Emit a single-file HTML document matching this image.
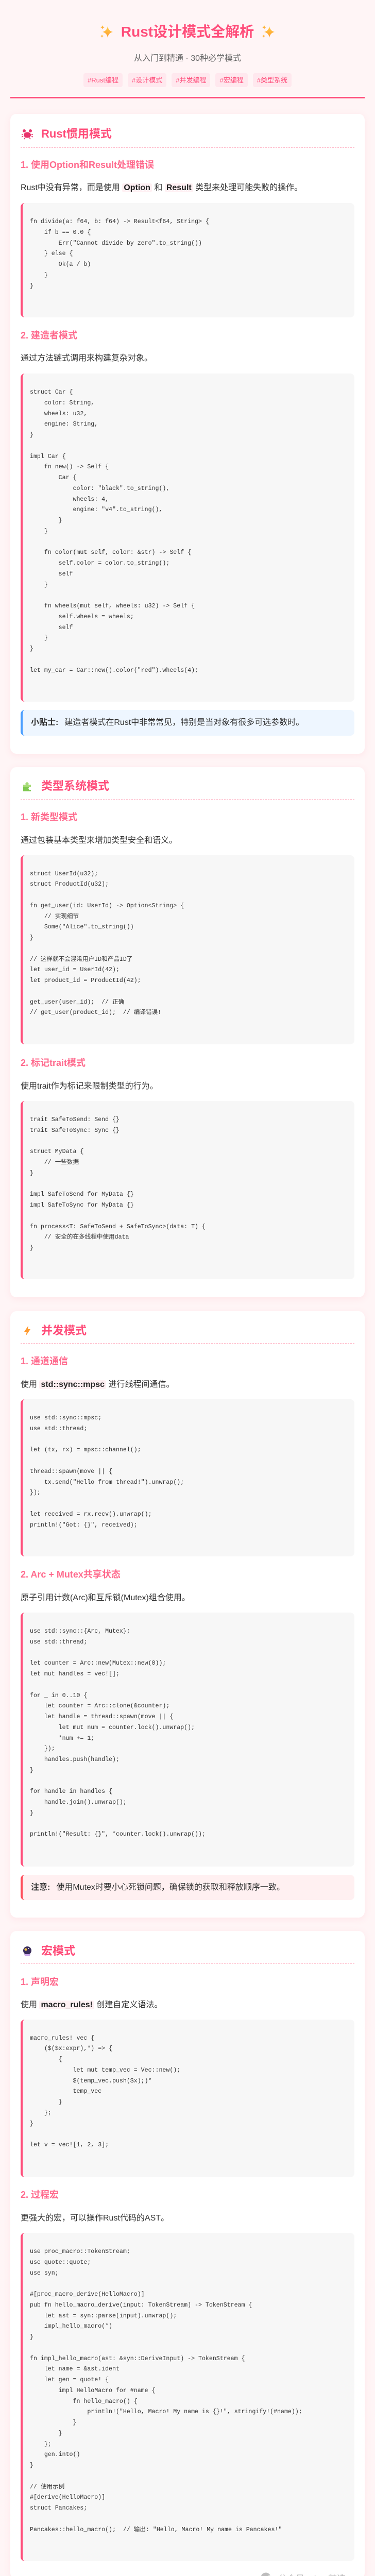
<!DOCTYPE html>
<html><head><meta charset="utf-8">
<style>
*{margin:0;padding:0;box-sizing:border-box}
html,body{width:728px;height:5032px;background:#fff5f6;overflow:hidden}
body{position:relative;font-family:"Liberation Sans","Noto Sans CJK SC",sans-serif;color:#333}
.a{position:absolute}
.card{position:absolute;left:20px;width:688px;background:#fff;border-radius:12px;box-shadow:0 3px 14px rgba(255,90,120,0.10)}
.h2{position:absolute;left:40px;height:30px;line-height:30px;font-size:22px;font-weight:bold;color:#ff4d7a;white-space:nowrap}
.h2 svg{position:absolute;left:2px;top:4px}
.h2 span{position:absolute;left:40px;top:0}
.dash{position:absolute;left:40px;width:648px;border-top:1px dashed #ffb8c8}
.h3{position:absolute;left:40px;height:26px;line-height:26px;font-size:18px;font-weight:bold;color:#ff6b8e;white-space:nowrap}
.p{position:absolute;left:40px;height:24px;line-height:24px;font-size:16px;color:#333;white-space:nowrap}
.p b{font-weight:bold;background:#fff0f3;padding:0 3px;border-radius:3px;color:#222}
pre{position:absolute;left:40px;width:648px;background:#f7f7f7;border-left:4px solid #ff4d7a;border-radius:8px;padding:27px 0 0 14px;font-family:"Liberation Mono","Noto Sans CJK SC",monospace;font-size:11.6px;line-height:20.75px;color:#333;white-space:pre;overflow:hidden}
.box{position:absolute;left:40px;width:648px;border-radius:8px;font-size:16px;line-height:24px;padding:13px 0 0 16px;white-space:nowrap;color:#333}
.box b{margin-right:12px}
</style></head><body>

<!-- header -->
<div class="a" style="left:0;top:42px;width:728px;height:40px;display:flex;justify-content:center;align-items:center;gap:14px">
<svg width="28" height="30" viewBox="0 0 28 30"><defs><linearGradient id="sg" x1="0" y1="0" x2="0" y2="1"><stop offset="0" stop-color="#ffcf4a"/><stop offset="1" stop-color="#ff9a2e"/></linearGradient></defs><path d="M16 4 Q17.5 13 26 15 Q17.5 17 16 26 Q14.5 17 6 15 Q14.5 13 16 4Z" fill="url(#sg)"/><path d="M6 2 Q6.7 5.3 10 6 Q6.7 6.7 6 10 Q5.3 6.7 2 6 Q5.3 5.3 6 2Z" fill="url(#sg)"/><path d="M5 20 Q5.5 22.5 8 23 Q5.5 23.5 5 26 Q4.5 23.5 2 23 Q4.5 22.5 5 20Z" fill="url(#sg)"/></svg>
<span style="font-size:28px;font-weight:bold;color:#ff4d7a;line-height:40px">Rust设计模式全解析</span>
<svg width="28" height="30" viewBox="0 0 28 30"><path d="M16 4 Q17.5 13 26 15 Q17.5 17 16 26 Q14.5 17 6 15 Q14.5 13 16 4Z" fill="url(#sg)"/><path d="M6 2 Q6.7 5.3 10 6 Q6.7 6.7 6 10 Q5.3 6.7 2 6 Q5.3 5.3 6 2Z" fill="url(#sg)"/><path d="M5 20 Q5.5 22.5 8 23 Q5.5 23.5 5 26 Q4.5 23.5 2 23 Q4.5 22.5 5 20Z" fill="url(#sg)"/></svg>
</div>
<div class="a" style="left:0;top:102px;width:728px;text-align:center;font-size:16px;line-height:24px;color:#666">从入门到精通 · 30种必学模式</div>
<div class="a" style="left:0;top:142px;width:728px;display:flex;justify-content:center;gap:10px;font-size:13px;color:#ff4d7a">
<span style="background:#ffe8ee;border-radius:4px;height:27px;line-height:27px;padding:0 8px">#Rust编程</span>
<span style="background:#ffe8ee;border-radius:4px;height:27px;line-height:27px;padding:0 8px">#设计模式</span>
<span style="background:#ffe8ee;border-radius:4px;height:27px;line-height:27px;padding:0 8px">#并发编程</span>
<span style="background:#ffe8ee;border-radius:4px;height:27px;line-height:27px;padding:0 8px">#宏编程</span>
<span style="background:#ffe8ee;border-radius:4px;height:27px;line-height:27px;padding:0 8px">#类型系统</span>
</div>
<div class="a" style="left:20px;top:188px;width:688px;height:3px;background:#ff4d7a"></div>

<!-- cards -->
<div class="card" style="top:221px;height:1242px"></div>
<div class="card" style="top:1489px;height:1029px"></div>
<div class="card" style="top:2545px;height:1177px"></div>
<div class="card" style="top:3748px;height:1258px"></div>

<!-- section 1 -->
<div class="h2" style="top:245px"><svg width="22" height="22" viewBox="0 0 22 22"><ellipse cx="11" cy="13" rx="7" ry="5.5" fill="#e8336b"/><circle cx="5" cy="5" r="3" fill="#e8336b"/><circle cx="17" cy="5" r="3" fill="#e8336b"/><path d="M3 15 L0 17 M3 12 L0 12 M19 15 L22 17 M19 12 L22 12 M7 18 L5 21 M15 18 L17 21" stroke="#e8336b" stroke-width="1.6"/></svg><span>Rust惯用模式</span></div>
<div class="dash" style="top:286px"></div>
<div class="h3" style="top:307px">1. 使用Option和Result处理错误</div>
<div class="p" style="top:353px">Rust中没有异常，而是使用 <b>Option</b> 和 <b>Result</b> 类型来处理可能失败的操作。</div>
<pre style="top:394px;height:222px">fn divide(a: f64, b: f64) -&gt; Result&lt;f64, String&gt; {
    if b == 0.0 {
        Err("Cannot divide by zero".to_string())
    } else {
        Ok(a / b)
    }
}</pre>
<div class="h3" style="top:638px">2. 建造者模式</div>
<div class="p" style="top:684px">通过方法链式调用来构建复杂对象。</div>
<pre style="top:725px;height:637px">struct Car {
    color: String,
    wheels: u32,
    engine: String,
}

impl Car {
    fn new() -&gt; Self {
        Car {
            color: "black".to_string(),
            wheels: 4,
            engine: "v4".to_string(),
        }
    }

    fn color(mut self, color: &amp;str) -&gt; Self {
        self.color = color.to_string();
        self
    }

    fn wheels(mut self, wheels: u32) -&gt; Self {
        self.wheels = wheels;
        self
    }
}

let my_car = Car::new().color("red").wheels(4);</pre>
<div class="box" style="top:1378px;height:50px;background:#eef6ff;border-left:4px solid #4a9eff"><b>小贴士:</b>建造者模式在Rust中非常常见，特别是当对象有很多可选参数时。</div>

<!-- section 2 -->
<div class="h2" style="top:1511px"><svg width="22" height="22" viewBox="0 0 22 22"><path d="M3 8 h5 a3 3 0 1 1 5 0 h5 v5 a3 3 0 1 0 0 5 v3 h-15z" fill="#7ec850"/><path d="M3 8 h5 a3 3 0 1 1 5 0 h5 v5 h-15z" fill="#a8dc78"/></svg><span>类型系统模式</span></div>
<div class="dash" style="top:1551px"></div>
<div class="h3" style="top:1573px">1. 新类型模式</div>
<div class="p" style="top:1620px">通过包装基本类型来增加类型安全和语义。</div>
<pre style="top:1660px;height:367px;padding-top:26.6px">struct UserId(u32);
struct ProductId(u32);

fn get_user(id: UserId) -&gt; Option&lt;String&gt; {
    // 实现细节
    Some("Alice".to_string())
}

// 这样就不会混淆用户ID和产品ID了
let user_id = UserId(42);
let product_id = ProductId(42);

get_user(user_id);  // 正确
// get_user(product_id);  // 编译错误!</pre>
<div class="h3" style="top:2050px">2. 标记trait模式</div>
<div class="p" style="top:2097px">使用trait作为标记来限制类型的行为。</div>
<pre style="top:2137px;height:346px">trait SafeToSend: Send {}
trait SafeToSync: Sync {}

struct MyData {
    // 一些数据
}

impl SafeToSend for MyData {}
impl SafeToSync for MyData {}

fn process&lt;T: SafeToSend + SafeToSync&gt;(data: T) {
    // 安全的在多线程中使用data
}</pre>

<!-- section 3 -->
<div class="h2" style="top:2568px"><svg width="22" height="22" viewBox="0 0 22 22"><path d="M13 1 L5 13 H10 L8 21 L17 8 H12 Z" fill="#ff9a2e"/></svg><span>并发模式</span></div>
<div class="dash" style="top:2607px"></div>
<div class="h3" style="top:2629px">1. 通道通信</div>
<div class="p" style="top:2676px">使用 <b>std::sync::mpsc</b> 进行线程间通信。</div>
<pre style="top:2716px;height:305px">use std::sync::mpsc;
use std::thread;

let (tx, rx) = mpsc::channel();

thread::spawn(move || {
    tx.send("Hello from thread!").unwrap();
});

let received = rx.recv().unwrap();
println!("Got: {}", received);</pre>
<div class="h3" style="top:3043px">2. Arc + Mutex共享状态</div>
<div class="p" style="top:3090px">原子引用计数(Arc)和互斥锁(Mutex)组合使用。</div>
<pre style="top:3130px;height:493px">use std::sync::{Arc, Mutex};
use std::thread;

let counter = Arc::new(Mutex::new(0));
let mut handles = vec![];

for _ in 0..10 {
    let counter = Arc::clone(&amp;counter);
    let handle = thread::spawn(move || {
        let mut num = counter.lock().unwrap();
        *num += 1;
    });
    handles.push(handle);
}

for handle in handles {
    handle.join().unwrap();
}

println!("Result: {}", *counter.lock().unwrap());</pre>
<div class="box" style="top:3639px;height:49px;background:#fff0f1;border-left:4px solid #ff4d5a"><b>注意:</b>使用Mutex时要小心死锁问题，确保锁的获取和释放顺序一致。</div>

<!-- section 4 -->
<div class="h2" style="top:3772px"><svg width="22" height="22" viewBox="0 0 22 22"><circle cx="11" cy="10" r="8" fill="#3a2d5c"/><circle cx="8" cy="8" r="2.5" fill="#f5c84a"/><circle cx="13" cy="6" r="1" fill="#fff"/><path d="M5 17 h12 l-1.5 4 h-9 z" fill="#c9a7e8"/></svg><span>宏模式</span></div>
<div class="dash" style="top:3811px"></div>
<div class="h3" style="top:3834px">1. 声明宏</div>
<div class="p" style="top:3880px">使用 <b>macro_rules!</b> 创建自定义语法。</div>
<pre style="top:3920px;height:306px;padding-top:26.6px">macro_rules! vec {
    ($($x:expr),*) =&gt; {
        {
            let mut temp_vec = Vec::new();
            $(temp_vec.push($x);)*
            temp_vec
        }
    };
}

let v = vec![1, 2, 3];</pre>
<div class="h3" style="top:4247px">2. 过程宏</div>
<div class="p" style="top:4294px">更强大的宏，可以操作Rust代码的AST。</div>
<pre style="top:4334px;height:637px">use proc_macro::TokenStream;
use quote::quote;
use syn;

#[proc_macro_derive(HelloMacro)]
pub fn hello_macro_derive(input: TokenStream) -&gt; TokenStream {
    let ast = syn::parse(input).unwrap();
    impl_hello_macro(*)
}

fn impl_hello_macro(ast: &amp;syn::DeriveInput) -&gt; TokenStream {
    let name = &amp;ast.ident
    let gen = quote! {
        impl HelloMacro for #name {
            fn hello_macro() {
                println!("Hello, Macro! My name is {}!", stringify!(#name));
            }
        }
    };
    gen.into()
}

// 使用示例
#[derive(HelloMacro)]
struct Pancakes;

Pancakes::hello_macro();  // 输出: "Hello, Macro! My name is Pancakes!"</pre>

<!-- watermark -->
<div class="a" style="left:506px;top:4991px;width:202px;height:24px;display:flex;align-items:center;gap:6px;color:#b5b5b5;font-size:17px;white-space:nowrap">
<svg width="28" height="22" viewBox="0 0 28 22"><ellipse cx="10" cy="9" rx="9" ry="7.5" fill="#bdbdbd"/><ellipse cx="18" cy="14" rx="8" ry="6.5" fill="#cfcfcf" stroke="#fff" stroke-width="1"/></svg>
<span>公众号 · Arm精选</span></div>
</body></html>
